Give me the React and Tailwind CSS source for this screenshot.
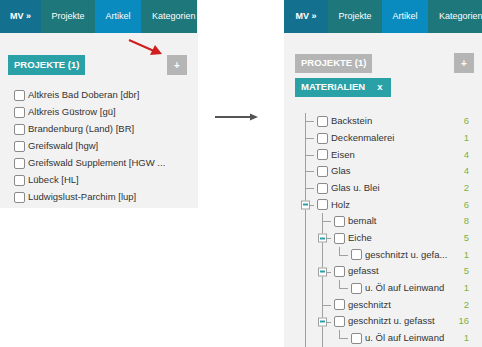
import React from 'react';

const FONT = { fontFamily: '"Liberation Sans", Arial, sans-serif' };

const PROJECTS = [
  'Altkreis Bad Doberan [dbr]',
  'Altkreis Güstrow [gü]',
  'Brandenburg (Land) [BR]',
  'Greifswald [hgw]',
  'Greifswald Supplement [HGW ...',
  'Lübeck [HL]',
  'Ludwigslust-Parchim [lup]'
];

const TREE = [
  { label: 'Backstein', count: 6, guides: ['tee'] },
  { label: 'Deckenmalerei', count: 1, guides: ['tee'] },
  { label: 'Eisen', count: 4, guides: ['tee'] },
  { label: 'Glas', count: 4, guides: ['tee'] },
  { label: 'Glas u. Blei', count: 2, guides: ['tee'] },
  { label: 'Holz', count: 6, guides: ['toggle'] },
  { label: 'bemalt', count: 8, guides: ['line', 'tee'] },
  { label: 'Eiche', count: 5, guides: ['line', 'toggle'] },
  { label: 'geschnitzt u. gefa...', count: 1, guides: ['line', 'line', 'corner'] },
  { label: 'gefasst', count: 5, guides: ['line', 'toggle'] },
  { label: 'u. Öl auf Leinwand', count: 1, guides: ['line', 'line', 'corner'] },
  { label: 'geschnitzt', count: 2, guides: ['line', 'tee'] },
  { label: 'geschnitzt u. gefasst', count: 16, guides: ['line', 'toggle'] },
  { label: 'u. Öl auf Leinwand', count: 1, guides: ['line', 'line', 'corner'] }
];

function Checkbox() {
  return <span className="block w-[11px] h-[11px] shrink-0 bg-white border border-[#8a8a8a] rounded-[2px]" />;
}

function Nav({ mvWidth }) {
  return (
    <div className="flex h-[33px] text-white text-[9px] whitespace-nowrap overflow-hidden">
      <div className={`${mvWidth} shrink-0 bg-[#13718f] flex items-center justify-center font-bold`}>MV »</div>
      <div className="w-[54px] shrink-0 bg-[#1d777b] flex items-center justify-center">Projekte</div>
      <div className="w-[46px] shrink-0 bg-[#0a8bbf] flex items-center justify-center">Artikel</div>
      <div className="w-[56px] shrink-0 bg-[#1d777b] flex items-center justify-start pl-[11px]">Kategorien</div>
    </div>
  );
}

function Guide({ type }) {
  return (
    <span className="relative w-[17px] h-full shrink-0">
      {type !== 'corner' && <span className="absolute left-[8px] top-0 bottom-0 w-px bg-[#a0a0a0]" />}
      {type === 'corner' && <span className="absolute left-[8px] top-0 h-1/2 w-px bg-[#a0a0a0]" />}
      {type !== 'line' && <span className="absolute left-[8px] right-0 top-1/2 h-px bg-[#a0a0a0]" />}
      {type === 'toggle' && (
        <span className="absolute left-[4px] top-1/2 -translate-y-1/2 w-[9px] h-[9px] bg-white border border-[#a0a0a0] flex items-center justify-center">
          <span className="w-[5px] h-[2px] bg-[#2aa0a7]" />
        </span>
      )}
    </span>
  );
}

export default function App() {
  return (
    <div className="w-[482px] h-[347px] bg-white flex overflow-hidden" style={FONT}>
      {/* before */}
      <div className="relative w-[198px] h-[208px] shrink-0 bg-[#f2f2f2]">
        <Nav mvWidth="w-[41px]" />
        <div className="flex items-center justify-between pl-[8px] pr-[11px] mt-[22px]">
          <div className="h-[20px] px-[6px] bg-[#2aa0a7] text-white font-bold text-[9.5px] flex items-center">PROJEKTE (1)</div>
          <div className="w-[20px] h-[20px] bg-[#b5b5b5] text-white font-bold text-[10px] flex items-center justify-center">+</div>
        </div>
        <ul className="mt-[12px] pl-[14px]">
          {PROJECTS.map(p => (
            <li key={p} className="h-[17px] flex items-center gap-[3px] text-[9.5px] text-[#333] whitespace-nowrap">
              <Checkbox />
              <span>{p}</span>
            </li>
          ))}
        </ul>
        <svg className="absolute left-[126px] top-[37px]" width="38" height="20" viewBox="0 0 38 20">
          <line x1="3" y1="3" x2="28" y2="14" stroke="#d11f1f" strokeWidth="2" />
          <polygon points="36,17 24,18 29,8" fill="#d11f1f" />
        </svg>
      </div>

      {/* arrow */}
      <div className="w-[86px] shrink-0 pt-[113px] pl-[17px]">
        <svg width="44" height="8" viewBox="0 0 44 8">
          <line x1="0" y1="4" x2="36" y2="4" stroke="#555" strokeWidth="2" />
          <polygon points="43,4 35,0.5 35,7.5" fill="#555" />
        </svg>
      </div>

      {/* after */}
      <div className="w-[198px] h-[347px] shrink-0 bg-[#f2f2f2] overflow-hidden">
        <Nav mvWidth="w-[44px]" />
        <div className="flex items-start justify-between pl-[11px] pr-[8px] mt-[21px]">
          <div className="flex flex-col items-start gap-[5px]">
            <div className="h-[19px] px-[6px] bg-[#b5b5b5] text-white font-bold text-[9.5px] flex items-center">PROJEKTE (1)</div>
            <div className="h-[19px] pl-[6px] pr-[8px] bg-[#2aa0a7] text-white font-bold text-[9.5px] flex items-center gap-[12px]">
              <span>MATERIALIEN</span>
              <span>x</span>
            </div>
          </div>
          <div className="w-[20px] h-[20px] -mt-[1px] bg-[#b5b5b5] text-white font-bold text-[10px] flex items-center justify-center">+</div>
        </div>
        <ul className="mt-[16px] pl-[13px] pr-[13px]">
          {TREE.map((r, i) => (
            <li key={i} className="h-[16.7px] flex items-center text-[9.5px] text-[#333] whitespace-nowrap">
              {r.guides.map((g, j) => <Guide key={j} type={g} />)}
              <span className="ml-[3px] flex"><Checkbox /></span>
              <span className="ml-[3px] flex-1 min-w-0">{r.label}</span>
              <span className="w-[20px] text-right text-[#7cb342]">{r.count}</span>
            </li>
          ))}
          <li className="h-[10px] flex"><Guide type="line" /><Guide type="line" /></li>
        </ul>
      </div>
    </div>
  );
}
